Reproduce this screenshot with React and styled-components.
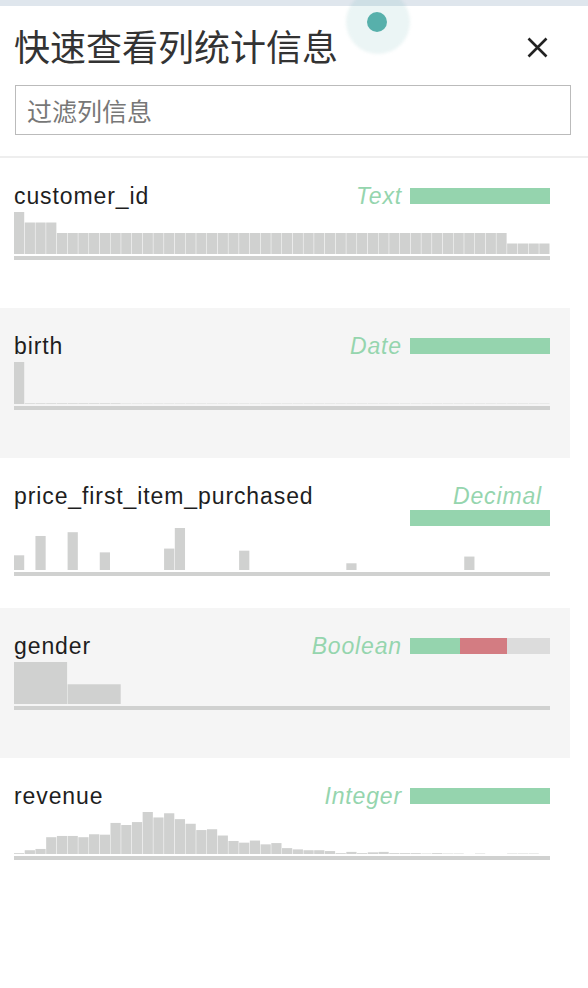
import React from "react"
import styled, { createGlobalStyle } from "styled-components"

const GlobalStyle = createGlobalStyle`
  html, body {
    margin: 0;
    padding: 0;
    background: #fff;
  }
  body {
    font-family: "Liberation Sans", "Noto Sans CJK SC", sans-serif;
    color: #222;
  }
`

const fill = (n, v) => Array(n).fill(v)

const sparse = (n, points) => {
  const out = fill(n, 0)
  Object.keys(points).forEach((k) => (out[k] = points[k]))
  return out
}

const columns = [
  {
    name: "customer_id",
    type: "Text",
    bins: [1, 0.75, 0.75, 0.75, ...fill(42, 0.5), ...fill(4, 0.25)],
  },
  {
    name: "birth",
    type: "Date",
    bins: [1, ...fill(9, 0.015), ...fill(40, 0.008)],
  },
  {
    name: "price_first_item_purchased",
    type: "Decimal",
    bins: sparse(50, {
      0: 0.35, 2: 0.81, 5: 0.9, 8: 0.42, 14: 0.51, 15: 1, 21: 0.46, 31: 0.16, 42: 0.32,
    }),
  },
  {
    name: "gender",
    type: "Boolean",
    bins: [1, 0.47, ...fill(8, 0)],
    split: [0.36, 0.33, 0.31],
  },
  {
    name: "revenue",
    type: "Integer",
    bins: [
      0.02, 0.09, 0.12, 0.4, 0.43, 0.43, 0.4, 0.47, 0.46, 0.74,
      0.69, 0.76, 1, 0.87, 0.97, 0.83, 0.72, 0.57, 0.59, 0.44,
      0.31, 0.27, 0.32, 0.23, 0.26, 0.14, 0.11, 0.09, 0.09, 0.07,
      0.02, 0.05, 0.02, 0.04, 0.05, 0.02, 0.02, 0.02, 0.01, 0.02,
      0.01, 0.01, 0, 0.01, 0, 0, 0.01, 0.01, 0.01, 0,
    ],
  },
]

const CHART_W = 536
const CHART_H = 42

// bins drawn edge to edge, a thin light stroke marks each boundary
function Histogram({ bins }) {
  const bw = CHART_W / bins.length
  return (
    <ChartSvg width={CHART_W} height={CHART_H + 6} viewBox={`0 0 ${CHART_W} ${CHART_H + 6}`}>
      {bins.map((v, i) =>
        v > 0 ? (
          <rect
            key={i}
            x={i * bw}
            y={CHART_H - v * CHART_H}
            width={bw - 0.5}
            height={v * CHART_H}
            fill="#d0d1d0"
          />
        ) : null
      )}
      <rect x="0" y={CHART_H + 2} width={CHART_W} height="4" fill="#d0d1d0" />
    </ChartSvg>
  )
}

function TypeBar({ split }) {
  const parts = split || [1]
  const colors = ["#95d4ae", "#d37c82", "#dcdcdc"]
  return (
    <Bar>
      {parts.map((p, i) => (
        <BarPart key={i} $color={colors[i]} style={{ width: `${p * 100}%` }} />
      ))}
    </Bar>
  )
}

export default function App() {
  return (
    <Page>
      <GlobalStyle />
      <TopStrip />
      <Pulse>
        <Halo />
        <Dot />
      </Pulse>
      <Header>
        <TitleRow>
          <Title>快速查看列统计信息</Title>
          <CloseButton aria-label="close">
            <svg width="21" height="21" viewBox="0 0 21 21">
              <path d="M1.5 1.5 L19.5 19.5 M19.5 1.5 L1.5 19.5" stroke="#222" strokeWidth="2.6" />
            </svg>
          </CloseButton>
        </TitleRow>
        <Filter placeholder="过滤列信息" />
      </Header>
      <Divider />
      <List>
        {columns.map((col, i) => (
          <Column key={col.name} $shaded={i % 2 === 1}>
            <ColumnHead>
              <ColumnName>{col.name}</ColumnName>
              <TypeInfo>
                <TypeLabel>{col.type}</TypeLabel>
                <TypeBar split={col.split} />
              </TypeInfo>
            </ColumnHead>
            <Histogram bins={col.bins} />
          </Column>
        ))}
      </List>
    </Page>
  )
}

const Page = styled.div`
  position: relative;
  width: 588px;
  height: 988px;
  overflow: hidden;
  background: #fff;
`

const TopStrip = styled.div`
  height: 6px;
  background: #dfe6ed;
`

const Pulse = styled.div`
  position: absolute;
  left: 346px;
  top: -10px;
  width: 64px;
  height: 64px;
  display: flex;
  align-items: center;
  justify-content: center;
`

const Halo = styled.span`
  position: absolute;
  inset: 0;
  border-radius: 50%;
  background: rgba(87, 176, 171, 0.12);
  filter: blur(1.5px);
`

const Dot = styled.span`
  position: relative;
  width: 20px;
  height: 20px;
  border-radius: 50%;
  background: #57b0ab;
  margin-left: -2px;
`

const Header = styled.div`
  padding: 17px 17px 0 15px;
`

const TitleRow = styled.div`
  display: flex;
  align-items: center;
  justify-content: space-between;
  height: 44px;
`

const Title = styled.h1`
  margin: 0 0 0 -1px;
  font-family: "Noto Sans CJK SC", sans-serif;
  font-size: 36px;
  font-weight: 400;
  line-height: 44px;
  color: #333;
`

const CloseButton = styled.button`
  display: flex;
  padding: 0;
  margin: 4px 23px 0 0;
  border: none;
  background: none;
`

const Filter = styled.input`
  display: block;
  box-sizing: border-box;
  width: 556px;
  height: 50px;
  margin-top: 18px;
  padding: 0 11px;
  border: 1px solid #bbb;
  outline: none;
  font-family: "Noto Sans CJK SC", sans-serif;
  font-size: 25px;
  color: #333;
  &::placeholder {
    color: #777;
  }
`

const Divider = styled.div`
  height: 2px;
  margin-top: 21px;
  background: #eee;
`

const List = styled.div`
  width: 570px;
`

const Column = styled.div`
  box-sizing: border-box;
  height: 150px;
  padding: 24px 20px 0 14px;
  background: ${(p) => (p.$shaded ? "#f5f5f5" : "#fff")};
`

const ColumnHead = styled.div`
  display: flex;
  align-items: flex-start;
`

const ColumnName = styled.div`
  flex-shrink: 0;
  margin-right: 12px;
  font-size: 23px;
  line-height: 28px;
  letter-spacing: 0.9px;
  color: #1e1e1e;
`

const TypeInfo = styled.div`
  flex: 1;
  min-width: 0;
  display: flex;
  flex-wrap: wrap;
  justify-content: flex-end;
  align-items: center;
`

const TypeLabel = styled.span`
  margin-right: 8px;
  font-size: 23px;
  font-style: italic;
  line-height: 28px;
  letter-spacing: 0.85px;
  color: #95d5ae;
`

const Bar = styled.div`
  display: flex;
  width: 140px;
  height: 16px;
`

const BarPart = styled.span`
  display: block;
  height: 100%;
  background: ${(p) => p.$color};
`

const ChartSvg = styled.svg`
  display: block;
  margin-top: 2px;
`
